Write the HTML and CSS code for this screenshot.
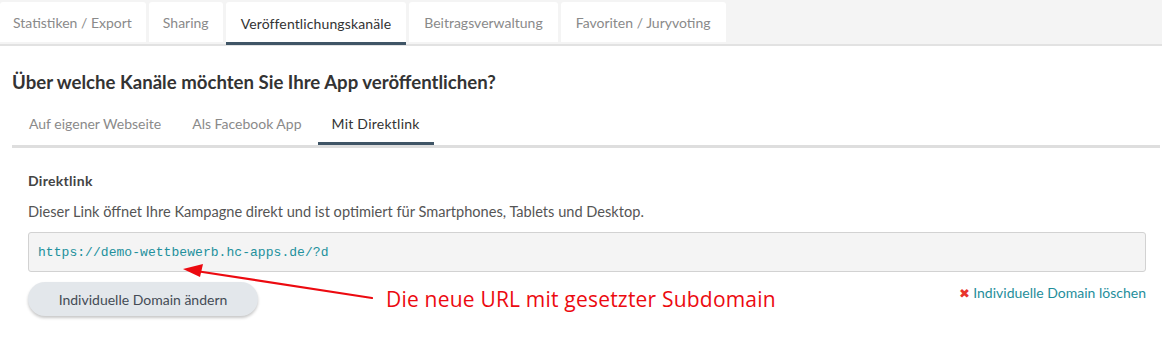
FILE: index.html
```
<!DOCTYPE html>
<html lang="de">
<head>
<meta charset="utf-8">
<title>Veröffentlichungskanäle</title>
<link rel="stylesheet" href="styles.css">
</head>
<body>
<div class="tabbar">
  <div class="tab">Statistiken / Export</div>
  <div class="tab">Sharing</div>
  <div class="tab active">Veröffentlichungskanäle</div>
  <div class="tab">Beitragsverwaltung</div>
  <div class="tab">Favoriten / Juryvoting</div>
</div>
<main class="content">
  <h2 class="title">Über welche Kanäle möchten Sie Ihre App veröffentlichen?</h2>
  <nav class="subtabs">
    <div class="subtab">Auf eigener Webseite</div>
    <div class="subtab">Als Facebook App</div>
    <div class="subtab active">Mit Direktlink</div>
  </nav>
  <section class="panel">
    <h3 class="panel-title">Direktlink</h3>
    <p class="panel-desc">Dieser Link öffnet Ihre Kampagne direkt und ist optimiert für Smartphones, Tablets und Desktop.</p>
    <div class="urlbox">https://demo-wettbewerb.hc-apps.de/?d</div>
    <div class="actions">
      <button class="btn">Individuelle Domain ändern</button>
      <a class="delete-link" href="#"><span class="x">✖</span>Individuelle Domain löschen</a>
    </div>
  </section>
</main>
<div class="annotation">
  <svg class="arrow" width="1162" height="338" viewBox="0 0 1162 338">
    <line x1="372" y1="298" x2="196" y2="271" stroke="#ec0a10" stroke-width="2.2" stroke-linecap="round"/>
    <polygon points="183,269 203,264 200,277" fill="#ec0a10"/>
  </svg>
  <span class="note">Die neue URL mit gesetzter Subdomain</span>
</div>
</body>
</html>
```
FILE: styles.css
```
* { box-sizing: border-box; }
body {
  margin: 0;
  font-family: Lato, "Open Sans", Arial, sans-serif;
  color: #333;
  background: #fff;
  position: relative;
  width: 1162px;
  height: 338px;
  overflow: hidden;
}
.tabbar {
  display: flex;
  align-items: flex-start;
  gap: 3px;
  height: 46px;
  padding-top: 2px;
  background: #f4f4f4;
  border-bottom: 2px solid #e2e2e2;
}
.tab {
  height: 40px;
  padding: 0 15px;
  background: #fff;
  border-radius: 3px 3px 0 0;
  display: flex;
  align-items: center;
  font-size: 14px;
  color: #8a8a8a;
}
.tab:first-child { padding-left: 13px; padding-right: 14px; }
.tab:nth-child(2) { padding: 0 14px; }
.tab.active {
  height: 43px;
  padding-top: 3px;
  color: #333;
  letter-spacing: 0.12px;
  border-bottom: 3px solid #3f5566;
}
.content {
  margin: 0 2px 0 12px;
}
.title {
  margin: 25px 0 0;
  font-size: 18.6px;
  line-height: 22px;
  font-weight: 700;
  color: #333;
}
.subtabs {
  display: flex;
  margin-top: 8px;
  height: 47px;
  border-bottom: 3px solid #dedede;
  padding-left: 2px;
}
.subtab {
  height: 44px;
  padding: 0 15px 0 15px;
  margin-right: 1px;
  display: flex;
  align-items: center;
  font-size: 14px;
  color: #8a8a8a;
}
.subtab.active {
  color: #333;
  padding: 3px 14px 0;
  letter-spacing: 0.25px;
  border-bottom: 3px solid #3f5566;
}
.panel {
  padding: 0 14px 0 16px;
}
.panel-title {
  margin: 24px 0 0;
  font-size: 14px;
  line-height: 18px;
  font-weight: 700;
  letter-spacing: 0.3px;
  color: #444;
}
.panel-desc {
  margin: 12px 0 0;
  font-size: 14.6px;
  line-height: 20px;
  color: #555;
}
.urlbox {
  margin-top: 10px;
  height: 40px;
  background: #f4f4f4;
  border: 1px solid #d2d2d2;
  border-radius: 3px;
  padding: 0 9px;
  display: flex;
  align-items: center;
  font-family: "Liberation Mono", "DejaVu Sans Mono", monospace;
  font-size: 13px;
  letter-spacing: 0.05px;
  color: #22909c;
}
.actions {
  display: flex;
  justify-content: space-between;
  align-items: flex-start;
  margin-top: 10px;
}
.btn {
  width: 230px;
  height: 34px;
  border: none;
  border-radius: 17px;
  background: #e3e7eb;
  box-shadow: 0 2px 3px rgba(0, 0, 0, 0.22);
  font-family: Lato, "Open Sans", Arial, sans-serif;
  font-size: 14px;
  color: #444b55;
  padding: 0;
}
.delete-link {
  font-size: 14px;
  line-height: 20px;
  color: #1f8e9b;
  text-decoration: none;
  margin-top: 1px;
}
.delete-link .x {
  color: #e8352c;
  font-size: 13px;
  margin-right: 3px;
}
.annotation {
  position: absolute;
  left: 0;
  top: 0;
  width: 1162px;
  height: 338px;
  pointer-events: none;
}
.arrow {
  position: absolute;
  left: 0;
  top: 0;
}
.note {
  position: absolute;
  left: 386px;
  top: 285px;
  font-family: "Open Sans", "Noto Sans", sans-serif;
  font-size: 21px;
  line-height: 28px;
  letter-spacing: 0.2px;
  color: #ec0a10;
  white-space: nowrap;
}
```
